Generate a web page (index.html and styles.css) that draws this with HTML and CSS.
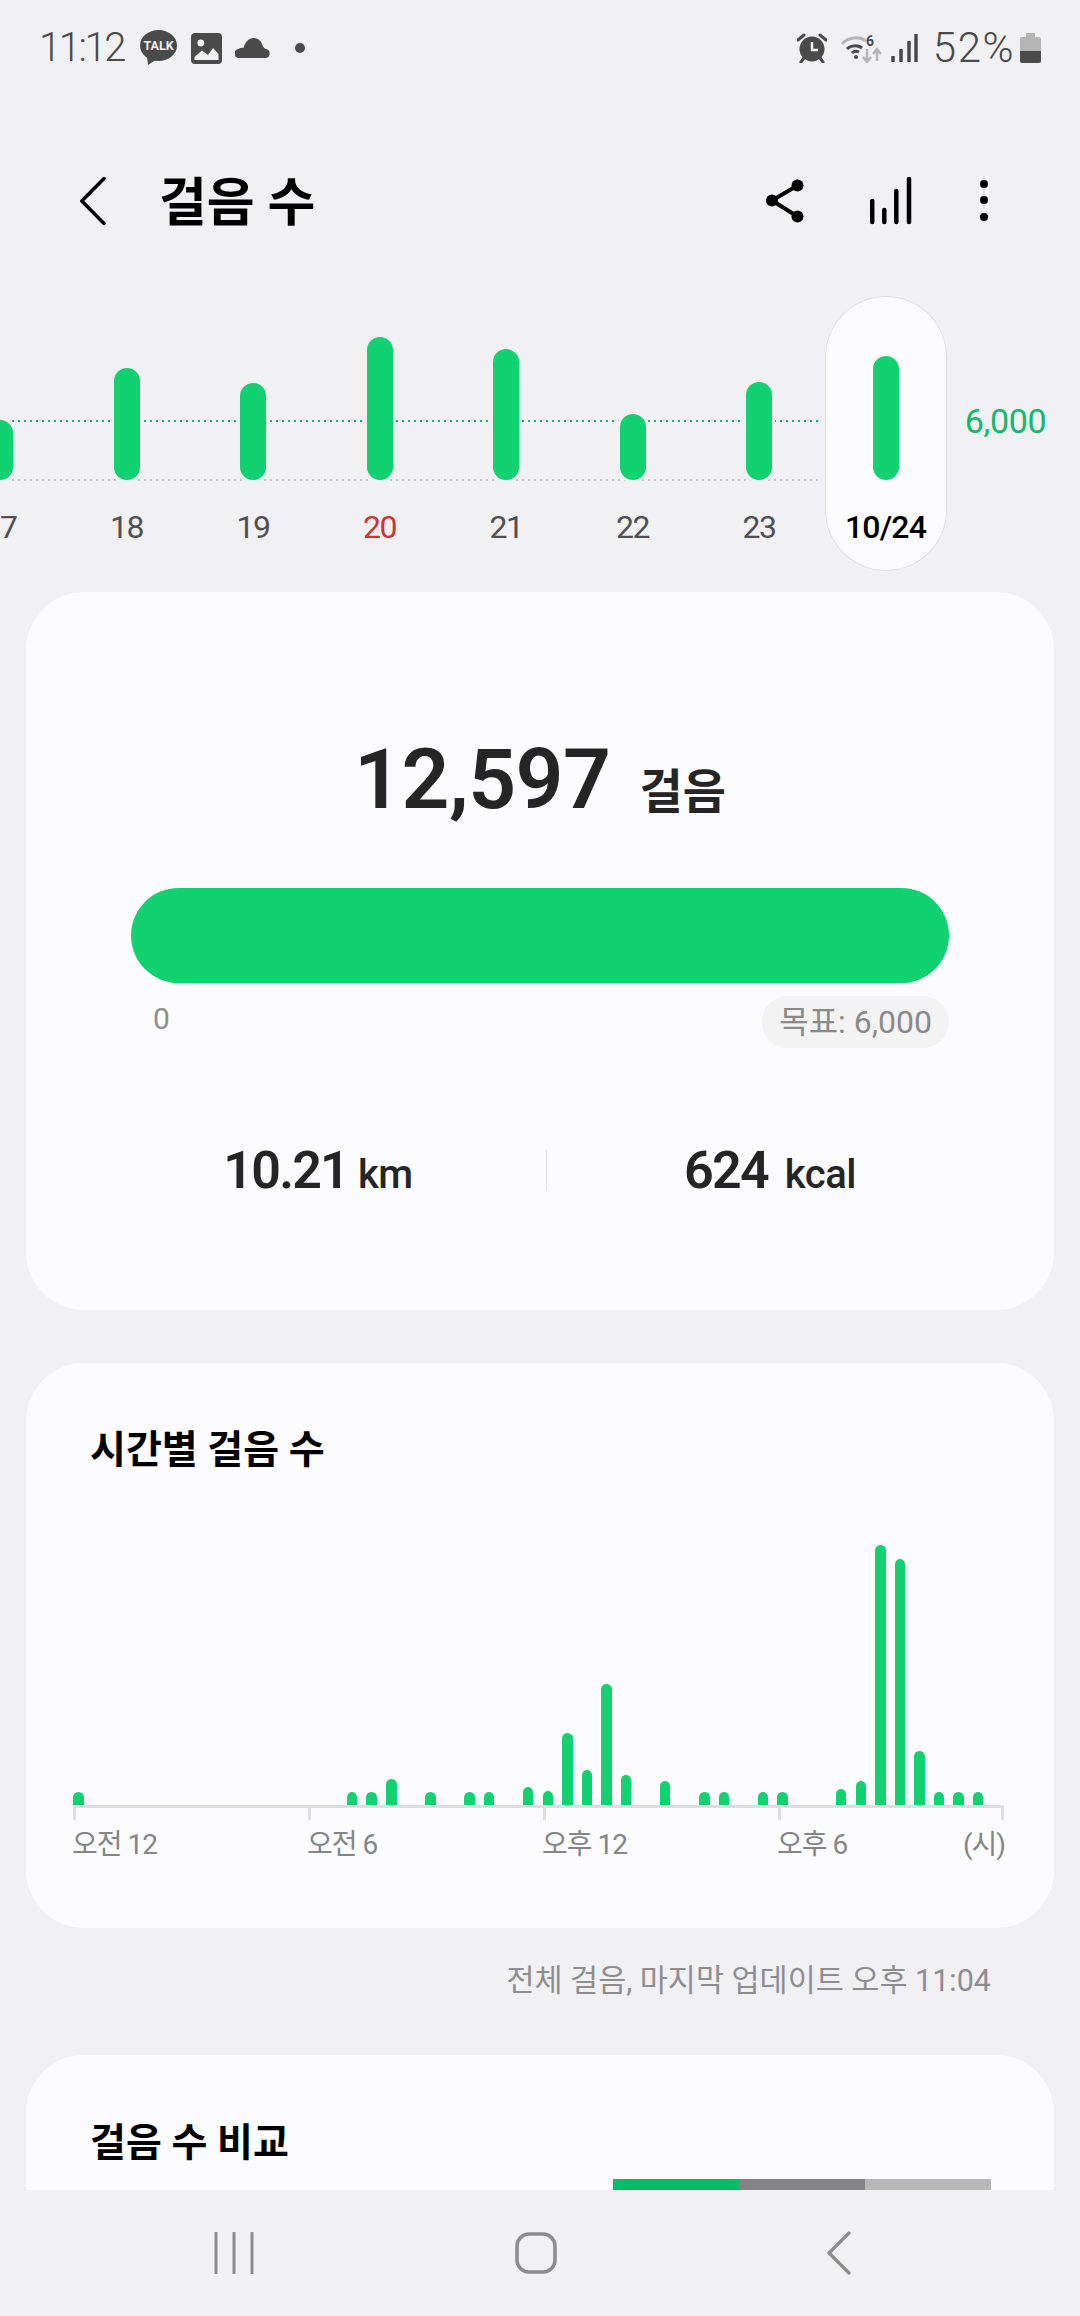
FILE: index.html
```html
<!DOCTYPE html>
<html lang="ko">
<head>
<meta charset="utf-8">
<title>걸음 수</title>
<link rel="stylesheet" href="styles.css">
</head>
<body>
<div class="screen">
  <main class="main">
    <div class="status">
      <div class="status-left">
        <span class="status-text status-time">11:12</span>
        <svg class="ic-talk" width="38" height="36" viewBox="0 0 38 36"><ellipse cx="18.5" cy="15.5" rx="18.5" ry="15.5" fill="#4a4a4a"/><path d="M7 26l1 9 9-6z" fill="#4a4a4a"/><text x="18.5" y="20" text-anchor="middle" class="talk-text">TALK</text></svg>
        <svg class="ic-image" width="31" height="31" viewBox="0 0 31 31"><rect width="31" height="31" rx="4" fill="#4a4a4a"/><circle cx="9.8" cy="10" r="3.4" fill="#f1f1f3"/><path d="M3.5 27v-3l7.500-6.500 6 4.500 5-7 5.500 6v6z" fill="#f1f1f3"/></svg>
        <svg class="ic-cloud" width="36" height="20" viewBox="0 0 36 20"><path d="M4.500 20a4.500 4.500 0 0 1-1-9c1.500-1 3.500-1.500 5-1C10 4 14 0 18.500 0c4.500 0 8 3 9 7.500 1 2 2 3 3.500 3.500a4.600 4.600 0 0 1 0 9z" fill="#4a4a4a"/></svg>
        <svg class="ic-dot" width="10" height="10" viewBox="0 0 10 10"><circle cx="5" cy="5" r="5" fill="#4a4a4a"/></svg>
      </div>
      <div class="status-right">
        <svg width="30" height="30" viewBox="0 0 30 30"><circle cx="15" cy="16" r="12.500" fill="#4a4a4a"/><path d="M1 7l6-5M29 7l-6-5M7 25l-3 4M23 25l3 4" stroke="#4a4a4a" stroke-width="3" stroke-linecap="round"/><path d="M15 9v8h6" stroke="#f1f1f3" stroke-width="2.500" fill="none"/></svg>
        <svg class="ic-wifi" width="41" height="30" viewBox="0 0 41 30"><path d="M1 11C7 4 18 3 25 8" stroke="#b5b5b5" stroke-width="3" fill="none"/><path d="M6 16c4-4 11-4 15-1M11 20c2-2 5-2 7-1" stroke="#4a4a4a" stroke-width="3" fill="none"/><circle cx="15" cy="24" r="2" fill="#4a4a4a"/><text x="25" y="13" class="wifi-six">6</text><path d="M26 16v12M22 24l4 5 4-5M36 28V17M32 21l4-5 4 5" stroke="#b5b5b5" stroke-width="2.500" fill="none"/></svg>
        <svg class="ic-signal" width="28" height="28" viewBox="0 0 28 28"><path d="M2 28v-6M10 28V15M18 28V7M25 28V0" stroke="#4a4a4a" stroke-width="3.500" stroke-linejoin="round"/></svg>
        <span class="status-text status-pct">52%</span>
        <svg class="ic-batt" width="21" height="30" viewBox="0 0 21 30"><path d="M6 0h9v4h4a2 2 0 0 1 2 2v12H0V6a2 2 0 0 1 2-2h4z" fill="#b5b5b5"/><path d="M0 18h21v10a2 2 0 0 1-2 2H2a2 2 0 0 1-2-2z" fill="#4a4a4a"/></svg>
      </div>
    </div>

    <header class="header">
      <div class="header-left">
        <svg width="26" height="50" viewBox="0 0 26 50"><path d="M24 2.500L1.800 25 24 47.500" stroke="#000" stroke-width="3.500" fill="none" stroke-linecap="round" stroke-linejoin="round"/></svg>
        <h1 class="page-title">걸음 수</h1>
      </div>
      <div class="header-actions">
        <svg class="act-share" width="38" height="44" viewBox="0 0 38 44"><path d="M31.500 6.500L6 21.500l25.500 16" stroke="#000" stroke-width="4" fill="none"/><circle cx="31.500" cy="6.500" r="6" fill="#000"/><circle cx="6" cy="21.500" r="6" fill="#000"/><circle cx="31.500" cy="37.500" r="6" fill="#000"/></svg>
        <svg class="act-bars" width="42" height="48" viewBox="0 0 42 48"><path d="M2.200 45V24M14.300 45V33M26.300 45V14M39 45V2" stroke="#000" stroke-width="4.500" stroke-linecap="round"/></svg>
        <svg class="act-more" width="10" height="44" viewBox="0 0 10 44"><circle cx="5" cy="5" r="4" fill="#000"/><circle cx="5" cy="21" r="4" fill="#000"/><circle cx="5" cy="38" r="4" fill="#000"/></svg>
      </div>
    </header>

    <section class="trend">
      <div class="trend-lines">
        <div class="line line-goal"></div>
        <div class="line line-base"></div>
      </div>
      <div class="day day-first"><div class="day-plot"><div class="day-bar" style="height:60px"></div></div><div class="day-label">17</div></div>
      <div class="day"><div class="day-plot"><div class="day-bar" style="height:112px"></div></div><div class="day-label">18</div></div>
      <div class="day"><div class="day-plot"><div class="day-bar" style="height:97px"></div></div><div class="day-label">19</div></div>
      <div class="day"><div class="day-plot"><div class="day-bar" style="height:143px"></div></div><div class="day-label day-sun">20</div></div>
      <div class="day"><div class="day-plot"><div class="day-bar" style="height:131px"></div></div><div class="day-label">21</div></div>
      <div class="day"><div class="day-plot"><div class="day-bar" style="height:66px"></div></div><div class="day-label">22</div></div>
      <div class="day"><div class="day-plot"><div class="day-bar" style="height:98px"></div></div><div class="day-label">23</div></div>
      <div class="day day-today"><div class="day-plot"><div class="day-bar" style="height:124px"></div></div><div class="day-label day-label-today">10/24</div></div>
      <div class="goal-value">6,000</div>
    </section>

    <section class="card card-summary">
      <div class="total"><span class="total-num">12,597</span><span class="total-unit">걸음</span></div>
      <div class="progress"></div>
      <div class="scale"><span class="scale-zero">0</span><span class="scale-goal">목표: 6,000</span></div>
      <div class="stats">
        <div class="stat"><span class="stat-num">10.21</span><span class="stat-unit">km</span></div>
        <div class="stat stat-right"><span class="stat-num">624</span><span class="stat-unit stat-unit-wide">kcal</span></div>
      </div>
    </section>

    <section class="card card-hourly">
      <h2 class="card-title">시간별 걸음 수</h2>
      <div class="hours">
        <div class="hour" style="height:13px"></div><div class="hour"></div><div class="hour"></div><div class="hour"></div><div class="hour"></div><div class="hour"></div><div class="hour"></div><div class="hour"></div>
        <div class="hour"></div><div class="hour"></div><div class="hour"></div><div class="hour"></div><div class="hour"></div><div class="hour"></div><div class="hour" style="height:13px"></div><div class="hour" style="height:13px"></div>
        <div class="hour" style="height:26px"></div><div class="hour"></div><div class="hour" style="height:13px"></div><div class="hour"></div><div class="hour" style="height:13px"></div><div class="hour" style="height:13px"></div><div class="hour"></div><div class="hour" style="height:18px"></div>
        <div class="hour" style="height:14px"></div><div class="hour" style="height:72px"></div><div class="hour" style="height:35px"></div><div class="hour" style="height:121px"></div><div class="hour" style="height:30px"></div><div class="hour"></div><div class="hour" style="height:24px"></div><div class="hour"></div>
        <div class="hour" style="height:13px"></div><div class="hour" style="height:13px"></div><div class="hour"></div><div class="hour" style="height:13px"></div><div class="hour" style="height:13px"></div><div class="hour"></div><div class="hour"></div><div class="hour" style="height:16px"></div>
        <div class="hour" style="height:24px"></div><div class="hour" style="height:260px"></div><div class="hour" style="height:246px"></div><div class="hour" style="height:54px"></div><div class="hour" style="height:13px"></div><div class="hour" style="height:13px"></div><div class="hour" style="height:13px"></div><div class="hour"></div>
      </div>
      <div class="axis">
        <div class="tick"></div><div class="tick"></div><div class="tick"></div><div class="tick tick-last"></div>
      </div>
      <div class="axis-labels">
        <span>오전 12</span><span>오전 6</span><span>오후 12</span><span class="axis-last"><span>오후 6</span><span>(시)</span></span>
      </div>
    </section>

    <p class="note">전체 걸음, 마지막 업데이트 오후 11:04</p>

    <section class="card card-compare">
      <h2 class="card-title">걸음 수 비교</h2>
      <div class="legend"><div class="legend-seg seg-me"></div><div class="legend-seg seg-mid"></div><div class="legend-seg seg-light"></div></div>
    </section>
  </main>

  <nav class="nav">
    <div class="nav-item"><svg width="40" height="42" viewBox="0 0 40 42"><path d="M2 1v40M20 1v40M38 1v40" stroke="#8c8c8c" stroke-width="3" stroke-linecap="round"/></svg></div>
    <div class="nav-item"><svg width="42" height="42" viewBox="0 0 42 42"><rect x="2" y="2" width="38" height="38" rx="12" fill="none" stroke="#8c8c8c" stroke-width="3.500"/></svg></div>
    <div class="nav-item"><svg width="24" height="44" viewBox="0 0 24 44"><path d="M22 2L2 22l20 20" stroke="#8c8c8c" stroke-width="3.200" fill="none" stroke-linecap="round" stroke-linejoin="round"/></svg></div>
  </nav>
</div>
</body>
</html>
```

FILE: styles.css
```css
* { box-sizing: border-box; }
html, body { margin: 0; padding: 0; }
body {
  background: #f1f1f3;
  font-family: Roboto, "Noto Sans CJK KR", sans-serif;
  color: #252525;
}
.screen {
  width: 1080px;
  height: 2316px;
  display: flex;
  flex-direction: column;
  overflow: hidden;
}
.main { flex: 1; min-height: 0; overflow: hidden; }

/* status bar */
.status {
  height: 96px;
  display: flex;
  justify-content: space-between;
  align-items: flex-start;
  padding: 26px 39px 0 39px;
}
.status-left, .status-right { display: flex; align-items: center; height: 44px; }
.status-text {
  font-size: 40px;
  font-weight: 300;
  color: #4a4a4a;
  line-height: 44px;
}
.status-time { letter-spacing: -2.400px; }
.status-left svg { display: block; }
.ic-talk { margin-left: 16px; }
.ic-image { margin-left: 13px; }
.ic-cloud { margin-left: 13px; }
.ic-dot { margin-left: 24px; }
.talk-text { font: 700 12.500px Roboto, sans-serif; fill: #f1f1f3; }
.wifi-six { font: 700 14px Roboto, sans-serif; fill: #4a4a4a; }
.ic-wifi { margin-left: 14px; }
.ic-signal { margin-left: 9px; }
.status-pct { margin-left: 14px; font-size: 42px; letter-spacing: 1.500px; }
.ic-batt { margin-left: 5px; }

/* header */
.header {
  margin-top: 45px;
  height: 120px;
  display: flex;
  align-items: center;
  justify-content: space-between;
  padding: 0 91px 0 80px;
}
.header-left { display: flex; align-items: center; }
.page-title {
  margin: 6px 0 0 53px;
  font-size: 52px;
  line-height: 60px;
  font-weight: 700;
  color: #000;
}
.header-actions { display: flex; align-items: center; }
.act-bars { margin-left: 66px; }
.act-more { margin-left: 67px; }

/* weekly trend */
.trend {
  position: relative;
  margin-top: 35px;
  height: 275px;
  display: flex;
  align-items: flex-start;
}
.trend-lines { position: absolute; left: 0; top: 0; width: 821px; height: 186px; }
.line {
  position: absolute;
  left: 0;
  width: 100%;
  height: 2px;
}
.line-goal { top: 124px; background: repeating-linear-gradient(90deg, #12b96a 0 2px, transparent 2px 6px); }
.line-base { top: 183px; background: repeating-linear-gradient(90deg, #c8c8ca 0 2px, transparent 2px 6px); }
.day {
  position: relative;
  width: 126.500px;
  height: 275px;
  flex: none;
  display: flex;
  flex-direction: column;
  align-items: center;
}
.day-first { margin-left: -63.250px; }
.day-plot { height: 184px; display: flex; align-items: flex-end; }
.day-bar {
  width: 26px;
  border-radius: 13px;
  background: #12d171;
  box-shadow: 0 0 0 3px #f1f1f3;
}
.day-label {
  margin-top: 27px;
  font-size: 32px;
  line-height: 40px;
  color: #505052;
  letter-spacing: -1.500px;
}
.day-sun { color: #cf3535; }
.day-today {
  width: 122px;
  margin: 0 2.250px;
  background: #fcfcfe;
  border-radius: 61px;
  box-shadow: inset 0 0 0 1px #dedee0;
}
.day-today .day-bar { box-shadow: none; }
.day-label-today { color: #000; font-weight: 500; letter-spacing: -0.800px; }
.goal-value {
  margin: 105px 0 0 16px;
  font-size: 34px;
  line-height: 40px;
  color: #12b96a;
  letter-spacing: -0.300px;
}

/* cards */
.card {
  margin: 0 26px;
  width: 1028px;
  background: #fcfcfe;
  border-radius: 58px;
}
.card-summary {
  margin-top: 21px;
  height: 718px;
  padding: 138px 105px 0;
}
.total {
  display: flex;
  justify-content: center;
  align-items: baseline;
  height: 100px;
  line-height: 100px;
}
.total-num {
  font-size: 84px;
  font-weight: 600;
  letter-spacing: -0.500px;
}
.total-unit {
  margin-left: 29px;
  font-size: 47px;
  font-weight: 700;
}
.progress {
  margin-top: 58px;
  height: 95px;
  border-radius: 48px;
  background: #12d171;
}
.scale {
  margin-top: 13px;
  height: 52px;
  display: flex;
  justify-content: space-between;
  align-items: center;
}
.scale-zero {
  margin-left: 22px;
  margin-top: -7px;
  font-size: 30px;
  color: #8f8f8f;
}
.scale-goal {
  height: 52px;
  line-height: 52px;
  padding: 0 17px;
  border-radius: 26px;
  background: #f3f3f4;
  color: #8a8a8a;
  font-size: 32px;
}
.stats {
  margin: 102px -44px 0 -41px;
  display: grid;
  grid-template-columns: 456px 447px;
  height: 41px;
}
.stat {
  display: flex;
  justify-content: center;
  align-items: baseline;
  height: 41px;
  line-height: 41px;
}
.stat-right { border-left: 1px solid #e4e4e6; }
.stat-num { font-size: 52px; font-weight: 600; letter-spacing: -1.800px; }
.stat-unit { margin-left: 10px; font-size: 40px; font-weight: 500; letter-spacing: -0.500px; }
.stat-unit-wide { margin-left: 17px; }

.card-hourly {
  margin-top: 53px;
  height: 565px;
  padding: 62px 0 0 47px;
}
.card-title {
  margin: 0 0 0 17px;
  font-size: 39px;
  line-height: 50px;
  font-weight: 700;
  color: #000;
}
.hours {
  margin-top: 50px;
  height: 280px;
  display: grid;
  grid-template-columns: repeat(48, 19.570px);
  align-items: end;
}
.hour {
  width: 10.500px;
  border-radius: 5.250px 5.250px 0 0;
  background: #12d171;
}
.axis {
  width: 931px;
  display: grid;
  grid-template-columns: 235px 235px 235px 226px;
  border-top: 3px solid #dedede;
}
.tick { height: 12px; border-left: 3px solid #dedede; }
.tick-last { border-right: 3px solid #dedede; }
.axis-labels {
  margin-top: 7px;
  margin-left: -1px;
  width: 933px;
  display: grid;
  grid-template-columns: 235px 235px 235px 228px;
  font-size: 28px;
  line-height: 36px;
  color: #858587;
  letter-spacing: -1px;
}
.axis-last { display: flex; justify-content: space-between; }

.note {
  margin: 33px 89px 0 0;
  text-align: right;
  font-size: 30.500px;
  line-height: 40px;
  color: #8e8e90;
}
.card-compare {
  margin-top: 54px;
  height: 500px;
  padding: 63px 63px 0 47px;
}
.legend {
  margin: 11px 0 0 auto;
  width: 378px;
  display: flex;
  height: 30px;
}
.legend-seg { flex: 1; }
.seg-me { background: #00bd66; }
.seg-mid { background: #848484; }
.seg-light { background: #b8b8b8; }

/* nav */
.nav {
  height: 126px;
  flex: none;
  display: flex;
  justify-content: center;
  align-items: center;
  padding-right: 8px;
}
.nav-item {
  width: 302.500px;
  display: flex;
  justify-content: center;
}
```
